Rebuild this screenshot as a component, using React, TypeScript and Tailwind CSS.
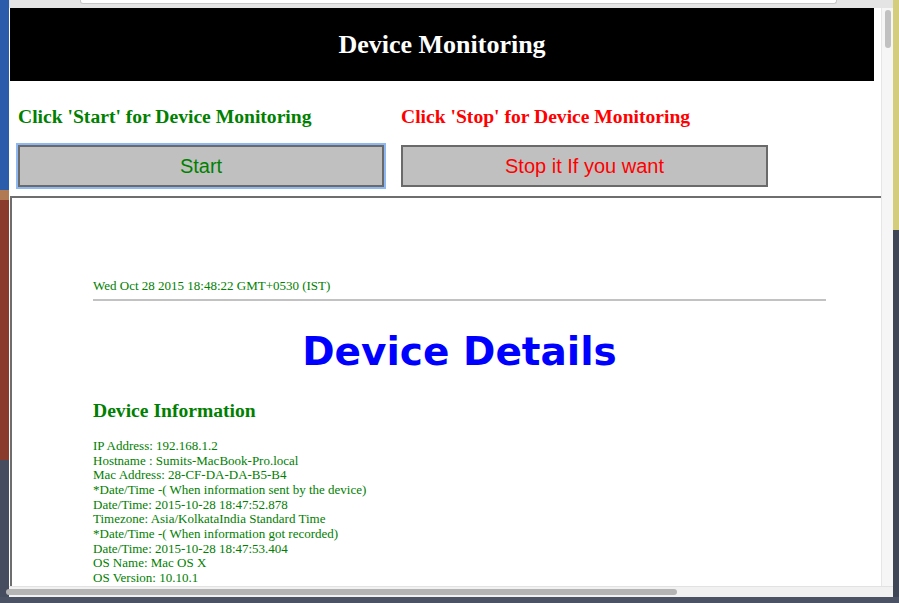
import React from "react";

const serif = { fontFamily: '"Liberation Serif", "Times New Roman", serif' };

export default function App() {
  const lines = [
    "IP Address: 192.168.1.2",
    "Hostname : Sumits-MacBook-Pro.local",
    "Mac Address: 28-CF-DA-DA-B5-B4",
    "*Date/Time -( When information sent by the device)",
    "Date/Time: 2015-10-28 18:47:52.878",
    "Timezone: Asia/KolkataIndia Standard Time",
    "*Date/Time -( When information got recorded)",
    "Date/Time: 2015-10-28 18:47:53.404",
    "OS Name: Mac OS X",
    "OS Version: 10.10.1",
  ];
  return (
    <div className="w-[899px] h-[603px] overflow-hidden flex flex-col bg-[#4b5264]">
      <div className="flex flex-1 min-h-0">
        {/* left desktop strip */}
        <div className="w-[9px] flex flex-col shrink-0">
          <div className="h-[190px] bg-[#2b5bab]" />
          <div className="h-[10px] bg-[#b27a52]" />
          <div className="h-[260px] bg-[#8a3b2c]" />
          <div className="flex-1 bg-[#454d5e]" />
        </div>
        {/* browser window */}
        <div className="flex-1 flex flex-col min-w-0 bg-[#ececec]">
          <div className="h-[8px] bg-[#e4e4e4] relative shrink-0">
            <div className="absolute left-[71px] w-[757px] top-0 h-[4px] bg-white border-b border-x border-[#c8c8c8] rounded-b-[3px]" />
          </div>
          <div className="flex flex-1 min-h-0">
            {/* page */}
            <div className="flex-1 min-w-0 bg-white overflow-hidden flex flex-col">
              <div className="ml-[1px] mr-[7px] h-[73px] bg-black flex items-center justify-center shrink-0">
                <span className="text-white font-bold text-[26px] leading-none" style={serif}>
                  Device Monitoring
                </span>
              </div>
              <div className="flex mt-[25px] ml-[9px] gap-[17px] shrink-0">
                <div className="w-[366px] flex flex-col">
                  <div className="text-[#008000] font-bold text-[19.6px] leading-[22px] whitespace-nowrap" style={serif}>
                    Click 'Start' for Device Monitoring
                  </div>
                  <button
                    className="mt-[17px] h-[42px] w-[366px] bg-[#c0c0c0] border-2 border-[#6a6a6a] shadow-[0_0_0_2px_#8db8f2] text-[#008000] text-[20px] flex items-center justify-center"
                    style={{ fontFamily: '"Liberation Sans", Arial, sans-serif' }}
                  >
                    Start
                  </button>
                </div>
                <div className="w-[367px] flex flex-col">
                  <div className="text-[#ff0000] font-bold text-[19.6px] leading-[22px] whitespace-nowrap" style={serif}>
                    Click 'Stop' for Device Monitoring
                  </div>
                  <button
                    className="mt-[17px] h-[42px] w-[367px] bg-[#c0c0c0] border-2 border-[#6a6a6a] text-[#ff0000] text-[20px] flex items-center justify-center"
                    style={{ fontFamily: '"Liberation Sans", Arial, sans-serif' }}
                  >
                    Stop it If you want
                  </button>
                </div>
              </div>
              {/* iframe */}
              <div className="mt-[9px] ml-[1px] w-[940px] flex-1 border-t-2 border-l-2 border-[#6e6e6e] bg-white">
                <div className="ml-[81px] w-[733px] pt-[80px]">
                  <div className="text-[#008000] text-[13px] leading-[15px] whitespace-nowrap" style={serif}>
                    Wed Oct 28 2015 18:48:22 GMT+0530 (IST)
                  </div>
                  <div className="mt-[6px] h-[2px] bg-[#c2c2c2]" />
                  <div
                    className="mt-[28px] text-center text-[#0000ff] font-bold text-[39px] leading-[46px]"
                    style={{ fontFamily: '"DejaVu Sans", Verdana, sans-serif' }}
                  >
                    Device Details
                  </div>
                  <div className="mt-[25px] text-[#008000] font-bold text-[19.6px] leading-[22px]" style={serif}>
                    Device Information
                  </div>
                  <div className="mt-[17px] text-[#008000] text-[13px] leading-[14.67px]" style={serif}>
                    {lines.map((l) => (
                      <div key={l} className="whitespace-nowrap">{l}</div>
                    ))}
                  </div>
                </div>
              </div>
            </div>
            {/* vertical scrollbar */}
            <div className="w-[12px] shrink-0 bg-[#f6f6f6] border-l border-[#e6e6e6] flex justify-center pt-[2px]">
              <div className="w-[6px] h-[38px] rounded-full bg-[#c1c1c1]" />
            </div>
          </div>
          {/* horizontal scrollbar */}
          <div className="h-[11px] shrink-0 bg-[#f1f1f1] border-t border-[#e2e2e2] flex items-center pl-[0px]">
            <div className="w-[671px] h-[6px] rounded-full bg-[#b4b4b4] -ml-[3px]" />
          </div>
        </div>
        {/* right desktop strip */}
        <div className="w-[6px] flex flex-col shrink-0">
          <div className="h-[230px] bg-[#d5cd7e]" />
          <div className="flex-1 bg-[#3f4656]" />
        </div>
      </div>
      <div className="h-[6px] shrink-0 bg-[#4b5264]" />
    </div>
  );
}
